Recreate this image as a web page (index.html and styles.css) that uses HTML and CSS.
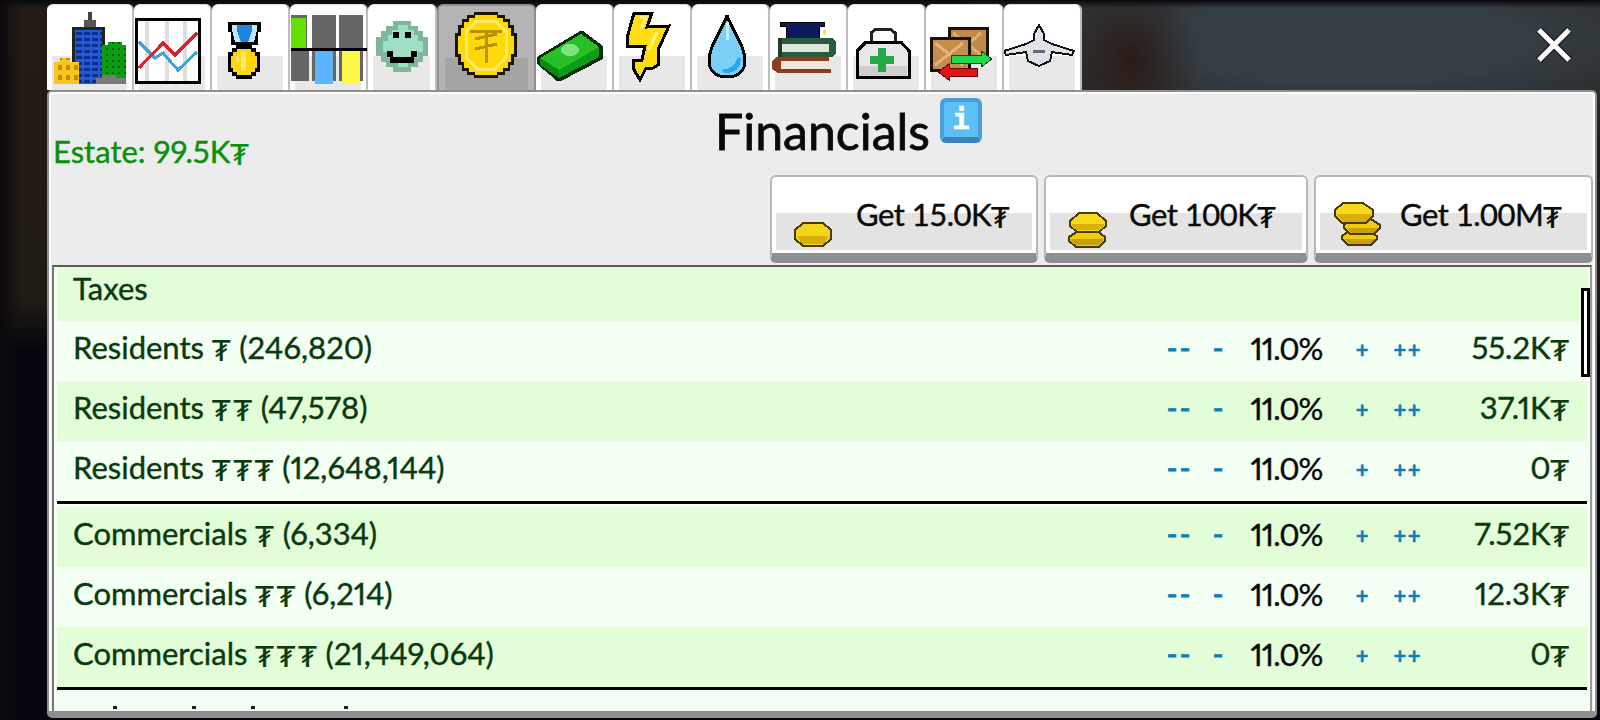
FILE: index.html
```html
<!DOCTYPE html>
<html lang="en">
<head>
    <meta charset="UTF-8">
    <title>Financials</title>
    <link rel="stylesheet" href="styles.css">
</head>
<body>
    <div class="game">
        <svg class="close" viewBox="0 0 36 36"><path d="M3 3L33 33M33 3L3 33" stroke="#222" stroke-width="8"/><path d="M3 3L33 33M33 3L3 33" stroke="#fff" stroke-width="5"/></svg>

        <nav class="tabs">
            <div class="tab first">
                <svg viewBox="47 4 87 86" shape-rendering="crispEdges">
                    <defs>
                        <pattern id="win" x="75" y="30" width="8" height="6" patternUnits="userSpaceOnUse"><rect width="8" height="6" fill="#2358d8"/><rect x="1" y="2" width="6" height="3" fill="#0d2f8c"/></pattern>
                        <pattern id="wing" x="104" y="46" width="6" height="6" patternUnits="userSpaceOnUse"><rect width="6" height="6" fill="#0c9c12"/><rect x="2" y="2" width="2" height="2" fill="#045f08"/></pattern>
                        <pattern id="winy" x="56" y="62" width="8" height="10" patternUnits="userSpaceOnUse"><rect width="8" height="10" fill="#f8c61c"/><rect x="2" y="3" width="4" height="5" fill="#c48a10"/></pattern>
                    </defs>
                    <rect x="88" y="12" width="4" height="16" fill="#444"/><rect x="84" y="20" width="12" height="8" fill="#555"/>
                    <rect x="72" y="27" width="33" height="57" fill="#222"/><rect x="75" y="30" width="27" height="54" fill="url(#win)"/>
                    <path d="M102 45h6v-3h14v3h4v39h-24z" fill="url(#wing)"/>
                    <path d="M54 62h6v-4h10v4h9v22h-25z" fill="url(#winy)"/>
                    <path d="M96 84v-6h6v-3h14v3h10v6z" fill="#7a7a7a"/>
                </svg>
            </div>
            <div class="tab">
                <svg viewBox="134 4 78 86" shape-rendering="crispEdges">
                    <rect x="136" y="20" width="63" height="62" fill="#fff"/>
                    <path d="M147 20v62M167 20v62M185 20v62" stroke="#ddd" stroke-width="4"/>
                    <rect x="136" y="19" width="63" height="63" fill="none" stroke="#000" stroke-width="3"/>
                    <polyline points="139,42 155,58 163,53 178,70 197,52" fill="none" stroke="#36a6dc" stroke-width="3"/>
                    <polyline points="139,68 163,43 175,55 197,33" fill="none" stroke="#d8232f" stroke-width="3"/>
                </svg>
            </div>
            <div class="tab">
                <svg viewBox="212 4 78 86" shape-rendering="crispEdges">
                    <path d="M228 22h33v10h-3v13h-27v-13h-3z" fill="#000"/>
                    <path d="M232 25h25v5l-3 12h-19l-3-12z" fill="#bfe6ff"/>
                    <path d="M237 25h15v6l-4 11h-7l-4-11z" fill="#1e86e0"/>
                    <path d="M236 45h16v3h4v4h4v20h-4v4h-4v3h-16v-3h-4v-4h-4v-20h4v-4h4z" fill="#000"/>
                    <path d="M237 49h14v3h4v4h2v12h-2v4h-4v3h-14v-3h-4v-4h-2v-12h2v-4h4z" fill="#ffd60a"/>
                    <path d="M241 52h5v19h-5zM236 56h3v6h-3z" fill="#ffe873"/>
                </svg>
            </div>
            <div class="tab">
                <svg viewBox="290 4 78 86" shape-rendering="crispEdges">
                    <rect x="291" y="15" width="16" height="33" fill="#666"/><rect x="291" y="18" width="15" height="30" fill="#62e000"/>
                    <rect x="312" y="15" width="24" height="33" fill="#666"/><rect x="339" y="15" width="24" height="33" fill="#666"/>
                    <rect x="291" y="51" width="18" height="30" fill="#666"/>
                    <rect x="312" y="51" width="24" height="30" fill="#666"/><rect x="315" y="51" width="18" height="33" fill="#5cb4ff"/>
                    <rect x="339" y="51" width="24" height="30" fill="#666"/><rect x="342" y="51" width="18" height="33" fill="#fff84c"/>
                    <rect x="291" y="48" width="76" height="3" fill="#000"/>
                </svg>
            </div>
            <div class="tab narrow">
                <svg viewBox="368 4 69 86" shape-rendering="crispEdges">
                    <path d="M393 21h18v5h7v5h5v6h5v19h-5v6h-5v5h-7v5h-18v-5h-7v-5h-5v-6h-5v-19h5v-6h5v-5h7z" fill="#7fb79d"/>
                    <path d="M398 25h10v5h6v5h4v6h5v11h-5v6h-4v5h-6v4h-10v-4h-6v-5h-4v-6h-5v-11h5v-6h4v-5h6z" fill="#9fe0c2"/>
                    <rect x="393" y="32" width="6" height="6" fill="#000"/><rect x="405" y="32" width="6" height="6" fill="#000"/>
                    <path d="M387 51h6v6h18v-6h6v6h-3v6h-24v-6h-3z" fill="#000"/>
                    <rect x="393" y="57" width="18" height="3" fill="#000"/>
                </svg>
            </div>
            <div class="tab active">
                <svg viewBox="437 4 99 86" shape-rendering="crispEdges">
                    <path d="M474 12h24v3h7v4h5v6h4v8h3v24h-3v8h-4v6h-5v4h-7v3h-24v-3h-7v-4h-5v-6h-4v-8h-3v-24h3v-8h4v-6h5v-4h7z" fill="#1c1404"/>
                    <path d="M475 15h22v3h6v4h5v6h3v8h3v18h-3v8h-3v6h-5v4h-6v3h-22v-3h-6v-4h-5v-6h-3v-8h-3v-18h3v-8h3v-6h5v-4h6z" fill="#ffd80a"/>
                    <path d="M477 21h18l11 10v26l-11 12h-18l-11-12v-26z" fill="none" stroke="#ffe96a" stroke-width="3"/>
                    <path d="M470 31h32M486 31v32M475 39l22-5M475 49l22-5" fill="none" stroke="#b79204" stroke-width="3"/>
                </svg>
            </div>
            <div class="tab">
                <svg viewBox="536 4 78 86" shape-rendering="crispEdges">
                    <path d="M537 57l43-26h3l20 15v13l-42 22h-4l-20-17z" fill="#062b06"/>
                    <path d="M540 58l41-24 18 13-40 23z" fill="#27c027"/>
                    <path d="M540 58l19 12v8l-19-13z" fill="#0a8a12"/><path d="M559 70l40-23v10l-40 21z" fill="#0f9c18"/>
                    <ellipse cx="570" cy="50" rx="9" ry="6" fill="#7fe37f"/>
                </svg>
            </div>
            <div class="tab">
                <svg viewBox="614 4 78 86" shape-rendering="crispEdges">
                    <path d="M634 13h18l-5 14 22-1-11 24v15l-5 3h-7l-6 12-7-12v-8h9l3-14h-18l0-8z" fill="#ffdc14" stroke="#000" stroke-width="3"/>
                    <path d="M640 17h6l-5 12M657 32l-8 18" fill="none" stroke="#fff27a" stroke-width="3"/>
                </svg>
            </div>
            <div class="tab">
                <svg viewBox="692 4 78 86" shape-rendering="crispEdges">
                    <path d="M727 15c3 12 18 30 18 46 0 10-7 16-18 16s-18-6-18-16c0-16 15-34 18-46z" fill="#7cd0f8" stroke="#000" stroke-width="3"/>
                    <path d="M741 58c0 10-6 15-14 15-3 0-5-1-5-3 10-1 14-6 15-12z" fill="#2aa6ee"/>
                    <path d="M727 22v18" stroke="#c6ecff" stroke-width="3"/>
                </svg>
            </div>
            <div class="tab">
                <svg viewBox="770 4 78 86" shape-rendering="crispEdges">
                    <path d="M780 22h44v4h-5v12h-33v-12h-6z" fill="#0c1a5a" stroke="#000" stroke-width="1"/>
                    <rect x="823" y="30" width="3" height="5" fill="#ffe25a"/>
                    <path d="M781 38h51l4 4v11l-4 4h-51v-5h48v-8h-48z" fill="#2c5a3c"/>
                    <rect x="781" y="44" width="48" height="8" fill="#dfe6dc"/><rect x="778" y="38" width="4" height="19" fill="#1c3c28"/>
                    <path d="M776 57h53v4h-48v8h50v4h-53l-6-4v-8z" fill="#8a3e1e"/>
                    <rect x="781" y="61" width="48" height="8" fill="#efe6da"/>
                </svg>
            </div>
            <div class="tab">
                <svg viewBox="848 4 78 86" shape-rendering="crispEdges">
                    <path d="M871 42v-9l5-4h14l5 4v9" fill="none" stroke="#222" stroke-width="3"/>
                    <path d="M866 42h35l8 9v26h-52v-26z" fill="#e8e8e8" stroke="#000" stroke-width="3"/>
                    <path d="M859 66h48v10h-48z" fill="#cfcfcf"/>
                    <path d="M878 48h8v8h8v8h-8v8h-8v-8h-8v-8h8z" fill="#28a745"/>
                </svg>
            </div>
            <div class="tab">
                <svg viewBox="926 4 78 86" shape-rendering="crispEdges">
                    <rect x="949" y="28" width="38" height="32" fill="#c08a4a" stroke="#1c1208" stroke-width="3"/>
                    <path d="M953 33l28 22M981 33l-14 12" stroke="#e0ae6c" stroke-width="3"/>
                    <rect x="931" y="38" width="38" height="32" fill="#c68e4e" stroke="#1c1208" stroke-width="3"/>
                    <path d="M935 43l28 22M963 43l-28 22" stroke="#e4b476" stroke-width="3"/>
                    <path d="M951 55h30v-4l11 8-11 8v-4h-30z" fill="#22d84a" stroke="#0a4a18" stroke-width="1"/>
                    <path d="M977 68h-28v-4l-11 8 11 8v-4h28z" fill="#e41414" stroke="#5a0808" stroke-width="1"/>
                </svg>
            </div>
            <div class="tab">
                <svg viewBox="1004 4 78 86" shape-rendering="crispEdges">
                    <path d="M1039 25l5 9v6l8 4 22 7-2 4-20-3-2 9-11 5-11-5-2-9-20 3-2-4 22-7 8-4v-6z" fill="#dfe2e6" stroke="#111" stroke-width="2"/>
                    <rect x="1033" y="50" width="12" height="3" fill="#667"/>
                </svg>
            </div>
        </nav>

        <div class="panel">
            <div class="title-row">
                <p class="estate">Estate: 99.5K<span class="cur">₮</span></p>
                <h1>Financials</h1>
                <div class="info-cell"><span class="info">i</span></div>
            </div>

            <div class="buy-row">
                <button class="buy small">
                    <svg viewBox="792 213 38 25" shape-rendering="crispEdges"><path d="M801 214h20l8 7v9l-8 7h-20l-8-7v-9z" fill="#f5d51a" stroke="#4a3a06" stroke-width="2"/><path d="M795 227h32l-5 8h-22z" fill="#d8ae08"/></svg>
                    <span>Get 15.0K<span class="cur">₮</span></span>
                </button>
                <button class="buy medium">
                    <svg viewBox="1066 203 39 37" shape-rendering="crispEdges">
                        <path d="M1076 223h19l8 6v4l-6 6h-23l-7-6v-4z" fill="#f0cb10" stroke="#4a3a06" stroke-width="2"/>
                        <path d="M1069 231h32v2l-5 4h-22l-5-4z" fill="#c99f06"/>
                        <path d="M1077 205h18l9 8v5l-7 6h-22l-7-6v-5z" fill="#f8da1c" stroke="#4a3a06" stroke-width="2"/>
                        <path d="M1070 216h32v2l-6 4h-21l-5-4z" fill="#d8ae08"/>
                    </svg>
                    <span>Get 100K<span class="cur">₮</span></span>
                </button>
                <button class="buy large">
                    <svg viewBox="1332 195 47 44" shape-rendering="crispEdges">
                        <path d="M1347 224h20l8 5v3l-6 6h-23l-6-6v-3z" fill="#f0cb10" stroke="#4a3a06" stroke-width="2"/>
                        <path d="M1343 232h30l-5 5h-21z" fill="#c99f06"/>
                        <path d="M1350 212h19l9 6v3l-6 6h-24l-6-6v-3z" fill="#f0cb10" stroke="#4a3a06" stroke-width="2"/>
                        <path d="M1345 221h31l-5 5h-22z" fill="#c99f06"/>
                        <path d="M1341 196h20l10 7v6l-7 7h-24l-7-7v-6z" fill="#f8da1c" stroke="#4a3a06" stroke-width="2"/>
                        <path d="M1335 207h34v2l-6 6h-22l-6-6z" fill="#d8ae08"/>
                    </svg>
                    <span>Get 1.00M<span class="cur">₮</span></span>
                </button>
            </div>

            <div class="list">
                <div class="scrollbar"></div>
                <div class="row head">Taxes</div>

                <div class="row pale">
                    <span class="name">Residents <span class="cur">₮</span> (246,820)</span>
                    <span class="minus2">--</span><span class="minus1">-</span><span class="pct">11.0%</span><span class="plus1">+</span><span class="plus2">++</span>
                    <span class="val">55.2K<span class="cur">₮</span></span>
                </div>
                <div class="row">
                    <span class="name">Residents <span class="cur">₮₮</span> (47,578)</span>
                    <span class="minus2">--</span><span class="minus1">-</span><span class="pct">11.0%</span><span class="plus1">+</span><span class="plus2">++</span>
                    <span class="val">37.1K<span class="cur">₮</span></span>
                </div>
                <div class="row pale">
                    <span class="name">Residents <span class="cur">₮₮₮</span> (12,648,144)</span>
                    <span class="minus2">--</span><span class="minus1">-</span><span class="pct">11.0%</span><span class="plus1">+</span><span class="plus2">++</span>
                    <span class="val">0<span class="cur">₮</span></span>
                </div>
                <div class="line"></div>
                <div class="row">
                    <span class="name">Commercials <span class="cur">₮</span> (6,334)</span>
                    <span class="minus2">--</span><span class="minus1">-</span><span class="pct">11.0%</span><span class="plus1">+</span><span class="plus2">++</span>
                    <span class="val">7.52K<span class="cur">₮</span></span>
                </div>
                <div class="row pale">
                    <span class="name">Commercials <span class="cur">₮₮</span> (6,214)</span>
                    <span class="minus2">--</span><span class="minus1">-</span><span class="pct">11.0%</span><span class="plus1">+</span><span class="plus2">++</span>
                    <span class="val">12.3K<span class="cur">₮</span></span>
                </div>
                <div class="row">
                    <span class="name">Commercials <span class="cur">₮₮₮</span> (21,449,064)</span>
                    <span class="minus2">--</span><span class="minus1">-</span><span class="pct">11.0%</span><span class="plus1">+</span><span class="plus2">++</span>
                    <span class="val">0<span class="cur">₮</span></span>
                </div>
                <div class="line flush"></div>
                <div class="cut-row"><i></i><i></i><i></i><i></i></div>
            </div>
        </div>
    </div>
</body>
</html>
```

FILE: styles.css
```css
/* Page */
body {
    margin: 0;
    height: 720px;
    box-sizing: border-box;
    padding: 4px 3px 2px 47px;
    overflow: hidden;
    font-family: 'Lato', 'DejaVu Sans', sans-serif;
    font-variant-numeric: proportional-nums;
    -webkit-text-stroke: 0.4px currentColor;
    color: #0a3a0e;
    background-color: #1c1a1a;
    background-image:
        linear-gradient(#08080c 0, transparent 8px),
        linear-gradient(90deg, #0c0a0c 0, transparent 20px),
        radial-gradient(ellipse 70px 80px at 1130px 60px, #2a1a16, transparent),
        radial-gradient(ellipse 520px 120px at 1350px 40px, #343e44 35%, transparent),
        linear-gradient(#241a16 0, #201a14 300px, #07060f 350px);
}

.game {
    position: relative;
}

.close {
    position: absolute;
    top: 23px;
    right: 25px;
    width: 36px;
    height: 36px;
}

/* Tabs */
.tabs {
    display: flex;
    height: 86px;
}

.tab {
    width: 78px;
    flex: none;
    box-sizing: border-box;
    border-top: 1px solid #ddd;
    border-right: 2px solid #bdbdbd;
    border-radius: 6px 6px 0 0;
    background: linear-gradient(#e8e8e8, #e8e8e8) 5px 51px / calc(100% - 10px) 100% no-repeat, #fff;
}

.tab.first {
    width: 87px;
}

.tab.narrow {
    width: 69px;
}

.tab.active {
    width: 99px;
    border: 2px solid #8f8f8f;
    border-bottom: none;
    background: linear-gradient(#a4a4a4, #a4a4a4) 6px 52px / calc(100% - 12px) 100% no-repeat, #b4b4b4;
}

.tab svg {
    display: block;
    width: 78px;
    height: 86px;
    margin-top: -1px;
}

.tab.first svg {
    width: 87px;
}

.tab.narrow svg {
    width: 69px;
}

.tab.active svg {
    margin-top: -2px;
    margin-left: -2px;
    width: 99px;
}

/* Panel */
.panel {
    height: 628px;
    box-sizing: border-box;
    display: flex;
    flex-direction: column;
    background-color: #ececec;
    border: 2px solid #8e8e8e;
    border-bottom-width: 7px;
    border-radius: 5px;
    box-shadow: inset 0 0 0 2px #fff;
    padding: 3px 2px 0 3px;
}

.title-row {
    height: 80px;
    flex: none;
    display: grid;
    grid-template-columns: 1fr auto 1fr;
}

.estate {
    margin: 37px 0 0 1px;
    font-size: 31px;
    line-height: 38px;
    color: #0a8f0a;
}

h1 {
    margin: 8px 0 0;
    font-size: 50px;
    line-height: 56px;
    font-weight: 400;
    color: #0a0a0a;
    -webkit-text-stroke-width: 0.8px;
}

.info-cell {
    padding: 3px 0 0 10px;
}

.info {
    display: block;
    width: 42px;
    height: 45px;
    box-sizing: border-box;
    border: 4px solid #4a9fd8;
    border-bottom: 6px solid #3c82b8;
    border-radius: 6px;
    background-color: #5cc0f4;
    color: #fff;
    font: bold 29px/34px 'DejaVu Sans Mono', monospace;
    text-align: center;
}

.buy-row {
    height: 88px;
    flex: none;
    display: flex;
    justify-content: flex-end;
    gap: 6px;
}

.buy {
    position: relative;
    box-sizing: border-box;
    height: 88px;
    padding: 0;
    border: 2px solid #b8b8b8;
    border-bottom: 10px solid #8f8f8f;
    border-radius: 6px;
    font-family: inherit;
    font-size: 31px;
    letter-spacing: -0.5px;
    white-space: nowrap;
    color: #0a0a0a;
    background: linear-gradient(#e3e3e3, #e3e3e3) 4px 36px / calc(100% - 8px) 37px no-repeat, #fff;
    display: flex;
    align-items: center;
}

.buy.small { width: 268px; }
.buy.medium { width: 264px; }
.buy.large { width: 279px; }

.buy svg {
    flex: none;
}

.buy.small svg { width: 38px; height: 25px; margin: 38px 24px 0 22px; }
.buy.medium svg { width: 39px; height: 37px; margin: 28px 22px 0 22px; }
.buy.large svg { width: 47px; height: 44px; margin: 17px 19px 0 18px; }

/* the tugrik sign comes from DejaVu, Lato has none */
.cur {
    font-family: 'DejaVu Sans', sans-serif;
    font-size: 29px;
    letter-spacing: 3px;
    margin-right: -2px;
    vertical-align: -2px;
    -webkit-text-stroke-width: 0.2px;
}

/* Tax list */
.list {
    position: relative;
    flex: 1;
    min-height: 0;
    margin: 2px 1px 0 0;
    padding: 0 3px;
    overflow: hidden;
    background-color: #f2fff2;
    border-top: 2px solid #5a5a5a;
    border-left: 2px solid #777;
    border-right: 2px solid #999;
}

.scrollbar {
    position: absolute;
    top: 21px;
    right: 0;
    width: 9px;
    height: 89px;
    box-sizing: border-box;
    border: 3px solid #000;
    background-color: #fff;
}

.row {
    height: 60px;
    box-sizing: border-box;
    display: flex;
    align-items: center;
    padding: 0 17px 6px 16px;
    font-size: 31px;
    background-color: #e3fdd8;
}

.row.pale {
    background-color: #f2fff2;
}

.row.head {
    height: 54px;
    padding-bottom: 12px;
}

.name {
    flex: 1;
}

.minus2, .minus1, .plus1, .plus2 {
    font-family: 'DejaVu Sans', sans-serif;
    text-align: center;
    color: #0b80b8;
}

.minus2, .minus1 {
    font-size: 28px;
    -webkit-text-stroke-width: 0.8px;
}

.plus1, .plus2 {
    font-size: 17px;
    font-weight: 700;
    margin-top: 4px;
    -webkit-text-stroke-width: 0.6px;
}

.minus2 { width: 40px; letter-spacing: 3px; }
.minus1 { width: 36px; }
.pct { width: 101px; text-align: center; color: #0a0a0a; letter-spacing: -1px; }
.plus1 { width: 50px; }
.plus2 { width: 40px; }

.val {
    width: 143px;
    text-align: right;
}

.line {
    height: 3px;
    margin-bottom: 3px;
    background-color: #000;
}

.line.flush {
    margin-bottom: 0;
}

/* tops of the next row, cut off by the bottom of the list */
.cut-row {
    display: flex;
    padding: 16px 0 0 56px;
}

.cut-row i {
    width: 4px;
    height: 3px;
    background-color: #123;
}

.cut-row i:nth-child(1) { margin-right: 75px; }
.cut-row i:nth-child(2) { margin-right: 55px; }
.cut-row i:nth-child(3) { margin-right: 89px; }
```
